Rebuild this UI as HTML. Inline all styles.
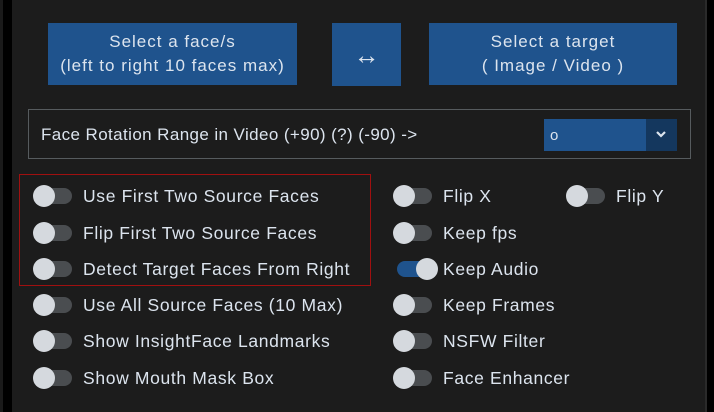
<!DOCTYPE html>
<html><head><style>
body{margin:0;width:714px;height:412px;background:#000;position:relative;overflow:hidden;font-family:"Liberation Sans",sans-serif;color:#dce4ee}
#bg{position:absolute;left:12px;top:0;width:693px;height:412px;background:#1c1c1c}
#l{position:absolute;left:0;top:0;width:3px;height:412px;background:#1a1a1a}
#r{position:absolute;left:705px;top:0;width:2px;height:412px;background:#2a2a2a}
.btn{position:absolute;background:#1f538d;color:#dce4ee;text-align:center;font-size:17px;letter-spacing:1px;line-height:24px;display:flex;align-items:center;justify-content:center}
#frame{position:absolute;left:28px;top:109px;width:661px;height:48px;border:1px solid #565b5e}
.lbl{position:absolute;font-size:17.5px;letter-spacing:0.65px;line-height:20px;white-space:nowrap}
.tg{position:absolute;width:38px;height:16px;border-radius:8px;background:#4a4d50}
.tg::after{content:"";position:absolute;left:-1px;top:-3px;width:22px;height:22px;border-radius:11px;background:#d5d9de}
.tg.on{background:#1f538d}
.tg.on::after{left:19px}
#red{position:absolute;left:19px;top:174px;width:350px;height:110px;border:1.5px solid #a01010}
</style></head><body>
<div id="l"></div><div id="bg"></div><div id="r"></div>
<div class="btn" style="left:48px;top:23px;width:249px;height:62px">Select a face/s<br>(left to right 10 faces max)</div>
<div class="btn" style="left:332px;top:23px;width:69px;height:63px;font-size:26px;letter-spacing:0">↔</div>
<div class="btn" style="left:429px;top:23px;width:248px;height:62px">Select a target<br>( Image / Video )</div>
<div id="frame"></div>
<div class="lbl" style="left:41px;top:125px;font-size:17px;letter-spacing:0.4px">Face Rotation Range in Video (+90) (?) (-90) -&gt;</div>
<div style="position:absolute;left:544px;top:119px;width:102px;height:32px;background:#1f538d"></div>
<div style="position:absolute;left:646px;top:119px;width:31px;height:32px;background:#14375e"></div>
<div class="lbl" style="left:550px;top:126px;font-size:15px">o</div>
<svg style="position:absolute;left:655px;top:129px" width="12" height="10"><path d="M2 3 L6 7 L10 3" stroke="#dce4ee" stroke-width="2.2" fill="none"/></svg>
<div id="red"></div>
<div class="tg" style="left:34px;top:188px"></div><div class="lbl" style="left:83px;top:186px">Use First Two Source Faces</div>
<div class="tg" style="left:34px;top:225px"></div><div class="lbl" style="left:83px;top:223px">Flip First Two Source Faces</div>
<div class="tg" style="left:34px;top:261px"></div><div class="lbl" style="left:83px;top:259px">Detect Target Faces From Right</div>
<div class="tg" style="left:34px;top:297px"></div><div class="lbl" style="left:83px;top:295px">Use All Source Faces (10 Max)</div>
<div class="tg" style="left:34px;top:333px"></div><div class="lbl" style="left:83px;top:331px">Show InsightFace Landmarks</div>
<div class="tg" style="left:34px;top:370px"></div><div class="lbl" style="left:83px;top:368px">Show Mouth Mask Box</div>
<div class="tg" style="left:394px;top:188px"></div><div class="lbl" style="left:443px;top:186px">Flip X</div>
<div class="tg" style="left:567px;top:188px"></div><div class="lbl" style="left:616px;top:186px">Flip Y</div>
<div class="tg" style="left:394px;top:225px"></div><div class="lbl" style="left:443px;top:223px">Keep fps</div>
<div class="tg on" style="left:397px;top:261px"></div><div class="lbl" style="left:443px;top:259px">Keep Audio</div>
<div class="tg" style="left:394px;top:297px"></div><div class="lbl" style="left:443px;top:295px">Keep Frames</div>
<div class="tg" style="left:394px;top:333px"></div><div class="lbl" style="left:443px;top:331px">NSFW Filter</div>
<div class="tg" style="left:394px;top:370px"></div><div class="lbl" style="left:443px;top:368px">Face Enhancer</div>
</body></html>
